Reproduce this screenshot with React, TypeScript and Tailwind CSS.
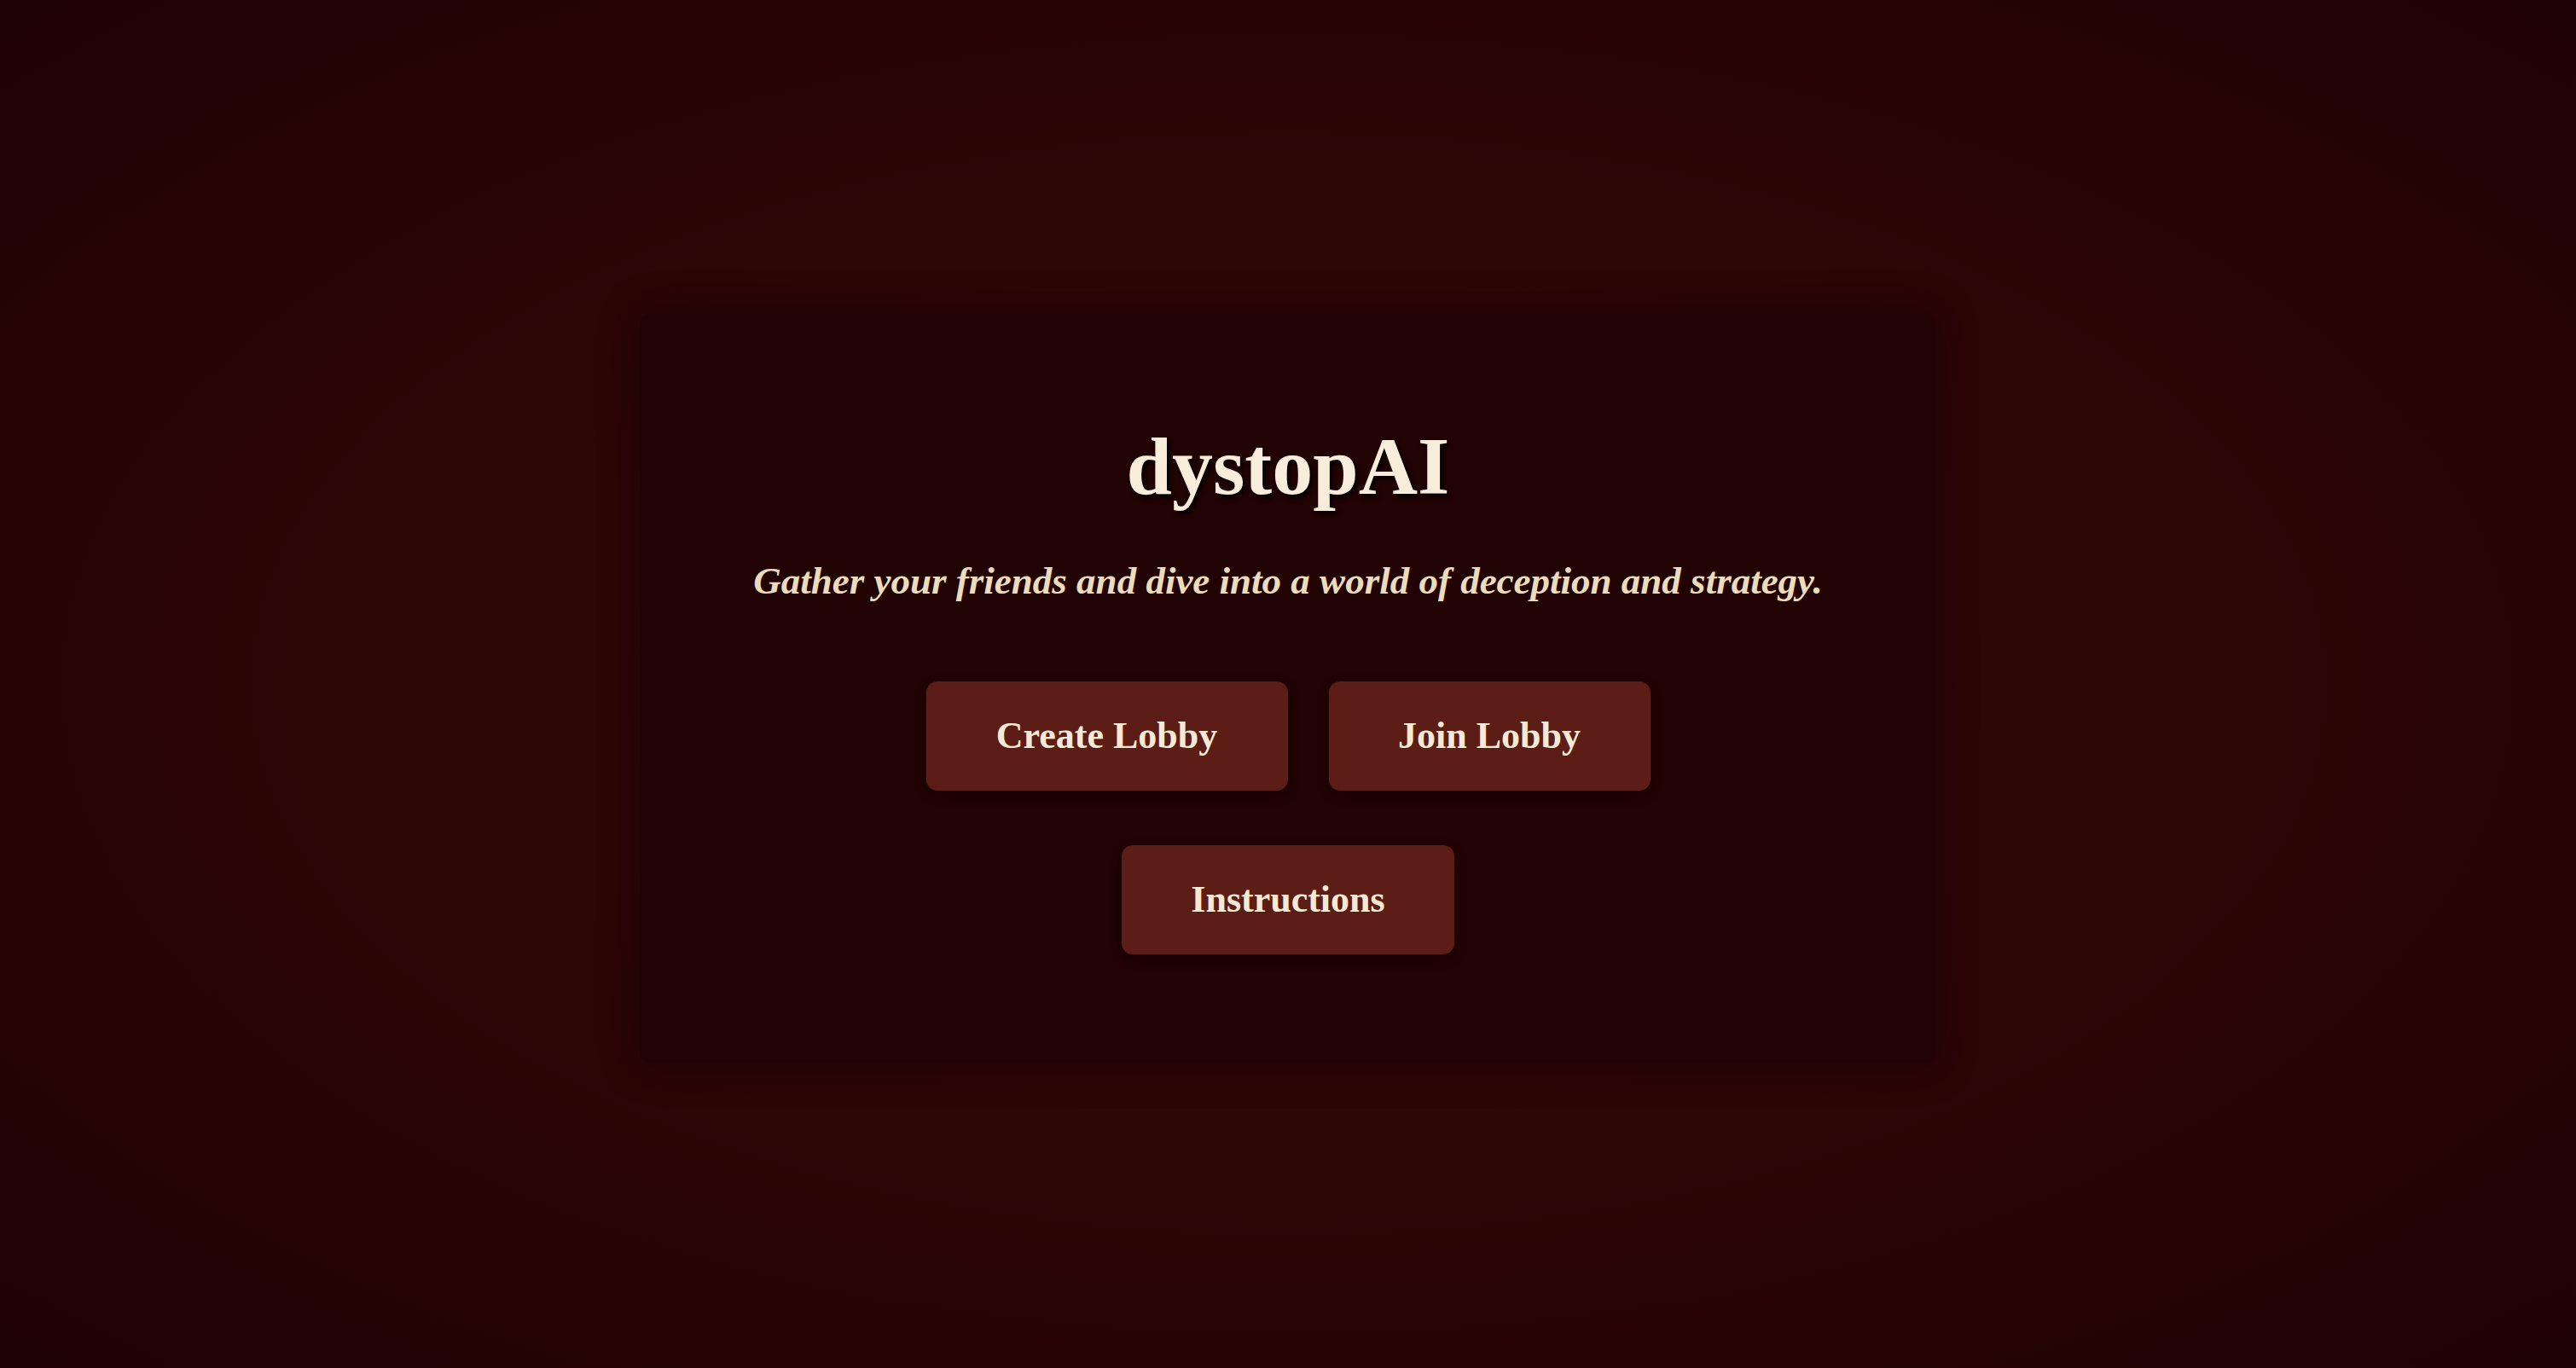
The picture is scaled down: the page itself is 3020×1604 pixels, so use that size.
import React from "react";

function LobbyButton({ label, width }: { label: string; width: string }) {
  return (
    <button
      className={`${width} h-[128px] rounded-[13px] bg-[#5b1d16] text-[#f6ead6] text-[44px] font-bold leading-none flex items-center justify-center shadow-[0_5px_14px_rgba(0,0,0,0.3)]`}
    >
      {label}
    </button>
  );
}

export default function App() {
  return (
    <div className="h-screen w-full pt-[10px] flex items-center justify-center bg-[radial-gradient(ellipse_at_center,#310606_0%,#2c0505_55%,#1f0202_100%)] font-['Liberation_Serif','Times_New_Roman',serif]">
      <main className="w-[1518px] rounded-xl bg-[#210303] shadow-[0_0_48px_rgba(0,0,0,0.35)] pt-[131px] pb-[128px] flex flex-col items-center">
        <h1 className="text-[96px] leading-[96px] font-bold text-[#f7edda] [text-shadow:3px_4px_5px_rgba(0,0,0,0.9)]">
          dystopAI
        </h1>
        <p className="mt-[64px] text-[45px] leading-[45px] font-bold italic text-[#ecdcb9]">
          Gather your friends and dive into a world of deception and strategy.
        </p>
        <div className="mt-[95px] flex gap-[48px]">
          <LobbyButton label="Create Lobby" width="w-[424px]" />
          <LobbyButton label="Join Lobby" width="w-[377px]" />
        </div>
        <div className="mt-[64px] flex">
          <LobbyButton label="Instructions" width="w-[390px]" />
        </div>
      </main>
    </div>
  );
}
